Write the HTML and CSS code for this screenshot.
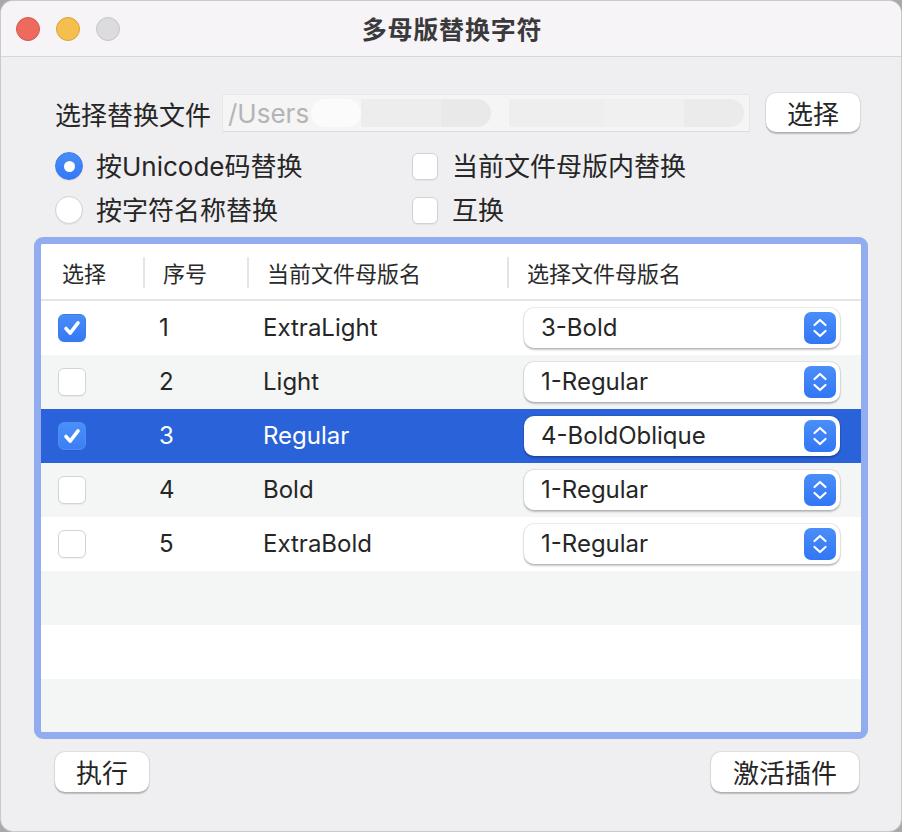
FILE: index.html
```html
<!DOCTYPE html>
<html lang="zh">
<head>
<meta charset="utf-8">
<title>多母版替换字符</title>
<link rel="stylesheet" href="styles.css">
</head>
<body>
<div class="window">
  <div class="titlebar">
    <div class="lights">
      <span class="light red"></span>
      <span class="light yellow"></span>
      <span class="light gray"></span>
    </div>
    <div class="title">多母版替换字符</div>
    <div></div>
  </div>

  <div class="content">
    <div class="file-row">
      <span class="label">选择替换文件</span>
      <div class="field">
        <span class="placeholder">/Users</span>
        <span class="blur b1"></span>
        <span class="blur b2"></span>
        <span class="blur b3"></span>
        <span class="blur b4"></span>
        <span class="blur b5"></span>
        <span class="blur b6"></span>
      </div>
      <button class="btn btn-choose">选择</button>
    </div>

    <div class="options">
      <label class="opt"><span class="radio on"></span><span>按Unicode码替换</span></label>
      <label class="opt"><span class="check"></span><span>当前文件母版内替换</span></label>
      <label class="opt"><span class="radio"></span><span>按字符名称替换</span></label>
      <label class="opt"><span class="check"></span><span>互换</span></label>
    </div>

    <div class="table">
      <div class="thead">
        <div class="th c1">选择</div>
        <div class="th c2 sep">序号</div>
        <div class="th c3 sep">当前文件母版名</div>
        <div class="th c4 sep">选择文件母版名</div>
      </div>
      <div class="tbody">
        <div class="tr">
          <div class="td c1"><span class="cbox checked"><svg viewBox="0 0 28 28"><path d="M7.5 14.5 L12 19.5 L20.5 8.5"/></svg></span></div>
          <div class="td c2">1</div>
          <div class="td c3">ExtraLight</div>
          <div class="td c4"><div class="popup"><span>3-Bold</span><span class="stepper"><svg viewBox="0 0 32 32"><path d="M10.5 13 L16 8 L21.5 13 M10.5 19 L16 24 L21.5 19"/></svg></span></div></div>
        </div>
        <div class="tr alt">
          <div class="td c1"><span class="cbox"></span></div>
          <div class="td c2">2</div>
          <div class="td c3">Light</div>
          <div class="td c4"><div class="popup"><span>1-Regular</span><span class="stepper"><svg viewBox="0 0 32 32"><path d="M10.5 13 L16 8 L21.5 13 M10.5 19 L16 24 L21.5 19"/></svg></span></div></div>
        </div>
        <div class="tr selected">
          <div class="td c1"><span class="cbox checked"><svg viewBox="0 0 28 28"><path d="M7.5 14.5 L12 19.5 L20.5 8.5"/></svg></span></div>
          <div class="td c2">3</div>
          <div class="td c3">Regular</div>
          <div class="td c4"><div class="popup"><span>4-BoldOblique</span><span class="stepper"><svg viewBox="0 0 32 32"><path d="M10.5 13 L16 8 L21.5 13 M10.5 19 L16 24 L21.5 19"/></svg></span></div></div>
        </div>
        <div class="tr alt">
          <div class="td c1"><span class="cbox"></span></div>
          <div class="td c2">4</div>
          <div class="td c3">Bold</div>
          <div class="td c4"><div class="popup"><span>1-Regular</span><span class="stepper"><svg viewBox="0 0 32 32"><path d="M10.5 13 L16 8 L21.5 13 M10.5 19 L16 24 L21.5 19"/></svg></span></div></div>
        </div>
        <div class="tr">
          <div class="td c1"><span class="cbox"></span></div>
          <div class="td c2">5</div>
          <div class="td c3">ExtraBold</div>
          <div class="td c4"><div class="popup"><span>1-Regular</span><span class="stepper"><svg viewBox="0 0 32 32"><path d="M10.5 13 L16 8 L21.5 13 M10.5 19 L16 24 L21.5 19"/></svg></span></div></div>
        </div>
        <div class="tr alt empty"></div>
        <div class="tr empty"></div>
        <div class="tr alt empty"></div>
      </div>
    </div>

    <div class="actions">
      <button class="btn btn-run">执行</button>
      <button class="btn btn-activate">激活插件</button>
    </div>
  </div>
</div>
</body>
</html>
```

FILE: styles.css
```css
* { box-sizing: border-box; }

html, body {
  margin: 0;
  padding: 0;
}

body {
  width: 902px;
  height: 832px;
  background: #a9a9ab;
  font-family: Inter, "Noto Sans CJK SC", sans-serif;
  color: #262626;
  overflow: hidden;
}

.window {
  width: 902px;
  height: 832px;
  background: #efeef1;
  border-radius: 13px;
  overflow: hidden;
  border: 1px solid #c9c8cc;
}

/* title bar */
.titlebar {
  height: 56px;
  background: #f6f4f7;
  border-bottom: 1px solid #d7d6d9;
  display: grid;
  grid-template-columns: 1fr auto 1fr;
  align-items: center;
}

.lights {
  display: flex;
  gap: 16px;
  padding-left: 15px;
}

.light {
  width: 24px;
  height: 24px;
  border-radius: 50%;
  display: block;
}
.light.red { background: #ee6a5f; border: 1px solid #d4574d; }
.light.yellow { background: #f5bf4f; border: 1px solid #d9a43a; }
.light.gray { background: #dcdbde; border: 1px solid #c6c5c8; }

.title {
  font-family: "Noto Sans CJK SC", sans-serif;
  font-size: 25px;
  font-weight: 700;
  color: #3a393c;
  letter-spacing: 0.8px;
  line-height: 30px;
  margin-top: -1px;
  padding-left: 2px;
}

/* content */
.content {
  padding: 36px 0 0 0;
}

.file-row {
  display: flex;
  align-items: center;
  padding-left: 54px;
  height: 39px;
}

.label {
  font-family: "Noto Sans CJK SC", sans-serif;
  font-size: 26px;
  line-height: 30px;
  width: 157px;
  color: #262626;
  padding-top: 3px;
}

.field {
  margin-left: 10px;
  width: 528px;
  height: 38px;
  background: #f5f5f5;
  border: 1px solid #e7e7e7;
  border-bottom-color: #dcdcdc;
  display: flex;
  align-items: center;
  padding-left: 5px;
  overflow: hidden;
}

.placeholder {
  font-size: 26px;
  color: #b4b4b4;
  line-height: 30px;
  font-family: Inter, sans-serif;
  padding-top: 2px;
}

.blur { display: block; height: 28px; }
.b1 { width: 50px; background: #fbfbfb; border-radius: 14px; margin-left: 2px; }
.b2 { width: 80px; background: #ededed; }
.b3 { width: 50px; background: #e9e9e9; border-radius: 0 14px 14px 0; }
.b4 { width: 95px; background: #eeeeee; margin-left: 18px; }
.b5 { width: 80px; background: #f0f0f0; }
.b6 { width: 60px; background: #ebebeb; border-radius: 0 14px 14px 0; }

.btn {
  font-family: "Noto Sans CJK SC", sans-serif;
  font-size: 26px;
  line-height: 30px;
  color: #262626;
  background: #ffffff;
  border: none;
  border-radius: 10px;
  box-shadow: 0 0 0 1px rgba(0,0,0,0.06), 0 1.5px 1.5px rgba(0,0,0,0.22);
  padding: 0;
  height: 39px;
  display: flex;
  align-items: center;
  justify-content: center;
}

.btn-choose {
  margin-left: 16px;
  width: 94px;
}

/* options */
.options {
  margin-top: 12px;
  display: grid;
  grid-template-columns: 357px 1fr;
  grid-auto-rows: 44px;
  padding-left: 54px;
}

.opt {
  display: flex;
  align-items: center;
  font-family: "Noto Sans CJK SC", sans-serif;
  font-size: 26px;
  line-height: 30px;
}

.opt span:last-child {
  font-family: Inter, "Noto Sans CJK SC", sans-serif;
  padding-top: 2px;
}

.radio {
  width: 28px;
  height: 28px;
  border-radius: 50%;
  background: #ffffff;
  border: 1px solid #d2d2d4;
  box-shadow: 0 1px 1px rgba(0,0,0,0.06);
  margin-right: 13px;
  display: flex;
  align-items: center;
  justify-content: center;
  flex: none;
}
.radio.on {
  background: linear-gradient(#4a8df8, #3478f6);
  border-color: #3a7cf0;
}
.radio.on::after {
  content: "";
  width: 11px;
  height: 11px;
  border-radius: 50%;
  background: #ffffff;
}

.check {
  width: 26px;
  height: 27px;
  border-radius: 6px;
  background: #ffffff;
  border: 1px solid #d2d2d4;
  box-shadow: 0 1px 1px rgba(0,0,0,0.05);
  margin-right: 14px;
  flex: none;
}

/* table */
.table {
  margin: 5px 33px 0 33px;
  border: 7px solid #91adef;
  border-radius: 9px;
  background: #ffffff;
  height: 502px;
  overflow: hidden;
}

.thead {
  display: grid;
  grid-template-columns: 102px 104px 260px 1fr;
  height: 57px;
  border-bottom: 2px solid #e5e5e5;
  background: #ffffff;
}

.th {
  display: flex;
  align-items: center;
  font-family: "Noto Sans CJK SC", sans-serif;
  font-size: 22px;
  line-height: 26px;
  color: #2a2a2a;
  position: relative;
}
.th.c1 { padding-left: 21px; }
.th.c2, .th.c3, .th.c4 { padding-left: 20px; }
.th.sep::before {
  content: "";
  position: absolute;
  left: 0;
  top: 13px;
  width: 2px;
  height: 31px;
  background: #e4e4e4;
}

.tr {
  display: grid;
  grid-template-columns: 102px 104px 260px 1fr;
  height: 54px;
  background: #ffffff;
}
.tr.alt { background: #f4f5f5; }
.tr.selected { background: #2a62d9; color: #ffffff; }

.td {
  display: flex;
  align-items: center;
  font-size: 24px;
  line-height: 30px;
  font-family: Inter, sans-serif;
}
.td.c1 { padding-left: 17px; }
.td.c2 { padding-left: 16px; }
.td.c3 { padding-left: 16px; }
.td.c4 { padding-left: 17px; }

.cbox {
  width: 28px;
  height: 28px;
  border-radius: 6px;
  background: #ffffff;
  border: 1px solid #d4d4d6;
  box-shadow: 0 1px 1px rgba(0,0,0,0.05);
  display: flex;
  align-items: center;
  justify-content: center;
}
.cbox.checked {
  background: linear-gradient(#4a8df8, #3478f6);
  border-color: #3a7cf0;
}
.tr.selected .cbox.checked {
  background: linear-gradient(#4b8ff9, #3c7ff5);
  border-color: #4f8cf5;
}
.cbox svg {
  width: 28px;
  height: 28px;
  fill: none;
  stroke: #ffffff;
  stroke-width: 3.8;
  stroke-linecap: round;
  stroke-linejoin: round;
}

.popup {
  width: 316px;
  height: 40px;
  background: #ffffff;
  border-radius: 10px;
  box-shadow: 0 0 0 1px rgba(0,0,0,0.07), 0 1.5px 2px rgba(0,0,0,0.22);
  display: flex;
  align-items: center;
  justify-content: space-between;
  padding-left: 17px;
  padding-right: 4px;
  color: #262626;
  font-size: 24px;
  line-height: 30px;
}

.stepper {
  width: 32px;
  height: 32px;
  border-radius: 7px;
  background: linear-gradient(#4a8ef8, #3176f5);
  display: flex;
}
.stepper svg {
  width: 32px;
  height: 32px;
  fill: none;
  stroke: #ffffff;
  stroke-width: 2.2;
  stroke-linecap: round;
  stroke-linejoin: round;
}

/* bottom actions */
.actions {
  display: flex;
  justify-content: space-between;
  padding: 13px 42px 0 54px;
}
.btn-run { width: 94px; height: 40px; }
.btn-activate { width: 148px; height: 40px; }
```
